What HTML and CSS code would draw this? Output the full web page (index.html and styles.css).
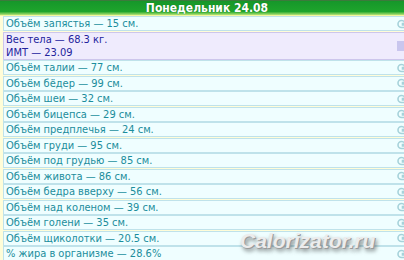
FILE: index.html
```html
<!DOCTYPE html>
<html lang="ru">
<head>
<meta charset="utf-8">
<link rel="stylesheet" href="styles.css">
</head>
<body>
<div class="page">
  <div class="header">Понедельник 24.08</div>
  <div class="list">
    <div class="row"><span>Объём запястья — 15 см.</span><svg class="ico" viewBox="0 0 12 10"><path d="M9 8.5H4.5A3.5 3.5 0 1 1 8 5V6H5.5V4.5H8"/></svg></div>
    <div class="row weight"><span>Вес тела — 68.3 кг.<br>ИМТ — 23.09</span><span class="sq"></span></div>
    <div class="row"><span>Объём талии — 77 см.</span><svg class="ico" viewBox="0 0 12 10"><path d="M9 8.5H4.5A3.5 3.5 0 1 1 8 5V6H5.5V4.5H8"/></svg></div>
    <div class="row"><span>Объём бёдер — 99 см.</span><svg class="ico" viewBox="0 0 12 10"><path d="M9 8.5H4.5A3.5 3.5 0 1 1 8 5V6H5.5V4.5H8"/></svg></div>
    <div class="row"><span>Объём шеи — 32 см.</span><svg class="ico" viewBox="0 0 12 10"><path d="M9 8.5H4.5A3.5 3.5 0 1 1 8 5V6H5.5V4.5H8"/></svg></div>
    <div class="row"><span>Объём бицепса — 29 см.</span><svg class="ico" viewBox="0 0 12 10"><path d="M9 8.5H4.5A3.5 3.5 0 1 1 8 5V6H5.5V4.5H8"/></svg></div>
    <div class="row"><span>Объём предплечья — 24 см.</span><svg class="ico" viewBox="0 0 12 10"><path d="M9 8.5H4.5A3.5 3.5 0 1 1 8 5V6H5.5V4.5H8"/></svg></div>
    <div class="row"><span>Объём груди — 95 см.</span><svg class="ico" viewBox="0 0 12 10"><path d="M9 8.5H4.5A3.5 3.5 0 1 1 8 5V6H5.5V4.5H8"/></svg></div>
    <div class="row"><span>Объём под грудью — 85 см.</span><svg class="ico" viewBox="0 0 12 10"><path d="M9 8.5H4.5A3.5 3.5 0 1 1 8 5V6H5.5V4.5H8"/></svg></div>
    <div class="row"><span>Объём живота — 86 см.</span><svg class="ico" viewBox="0 0 12 10"><path d="M9 8.5H4.5A3.5 3.5 0 1 1 8 5V6H5.5V4.5H8"/></svg></div>
    <div class="row"><span>Объём бедра вверху — 56 см.</span><svg class="ico" viewBox="0 0 12 10"><path d="M9 8.5H4.5A3.5 3.5 0 1 1 8 5V6H5.5V4.5H8"/></svg></div>
    <div class="row"><span>Объём над коленом — 39 см.</span><svg class="ico" viewBox="0 0 12 10"><path d="M9 8.5H4.5A3.5 3.5 0 1 1 8 5V6H5.5V4.5H8"/></svg></div>
    <div class="row"><span>Объём голени — 35 см.</span><svg class="ico" viewBox="0 0 12 10"><path d="M9 8.5H4.5A3.5 3.5 0 1 1 8 5V6H5.5V4.5H8"/></svg></div>
    <div class="row"><span>Объём щиколотки — 20.5 см.</span><svg class="ico" viewBox="0 0 12 10"><path d="M9 8.5H4.5A3.5 3.5 0 1 1 8 5V6H5.5V4.5H8"/></svg></div>
    <div class="row"><span>% жира в организме — 28.6%</span><svg class="ico" viewBox="0 0 12 10"><path d="M9 8.5H4.5A3.5 3.5 0 1 1 8 5V6H5.5V4.5H8"/></svg></div>
  </div>
  <div class="mark">Calorizator.ru</div>
</div>
</body>
</html>
```

FILE: styles.css
```css
html, body {
  margin: 0;
  padding: 0;
  background: #fffdd8;
  overflow: hidden;
}
.page {
  position: relative;
  width: 404px;
  height: 260px;
  overflow: hidden;
  font-family: "DejaVu Sans Condensed", "DejaVu Sans", sans-serif;
  font-size: 11px;
}
.header {
  height: 14px;
  border-top: 1px solid #3c7a3c;
  border-bottom: 1px solid #f4f6a0;
  background: linear-gradient(#16962a 0%, #1ea52c 75%, #6cc650 88%, #b8e27a 100%);
  color: #ffffff;
  font-weight: bold;
  font-size: 12px;
  line-height: 14px;
  text-align: center;
  padding-left: 10px;
  text-shadow: 0 0 1px #1a6a1a;
}
.list {
  display: flex;
  flex-direction: column;
  gap: 0.5px;
  padding-left: 3px;
}
.row {
  display: flex;
  justify-content: space-between;
  align-items: center;
  margin-right: -6px;
  border: 1px solid #bfe2ea;
  background: #effeff;
  color: #1b8d9c;
  line-height: 13px;
  padding-left: 2px;
}
.row.weight {
  background: #efebfd;
  border-color: #cdc6ec;
  color: #23239c;
}
.ico {
  width: 12px;
  height: 10px;
  fill: none;
  stroke: #a6d2da;
  stroke-width: 1.6;
}
.sq {
  width: 12px;
  height: 10px;
  background: #c9c6ee;
}
.mark {
  position: absolute;
  left: 240px;
  top: 229px;
  font-family: "Liberation Sans", sans-serif;
  font-weight: bold;
  font-style: italic;
  font-size: 21px;
  color: #ececec;
  text-shadow: 1px 1px 0 #9a9a9a, 2px 3px 4px rgba(0,0,0,0.55);
}
```
